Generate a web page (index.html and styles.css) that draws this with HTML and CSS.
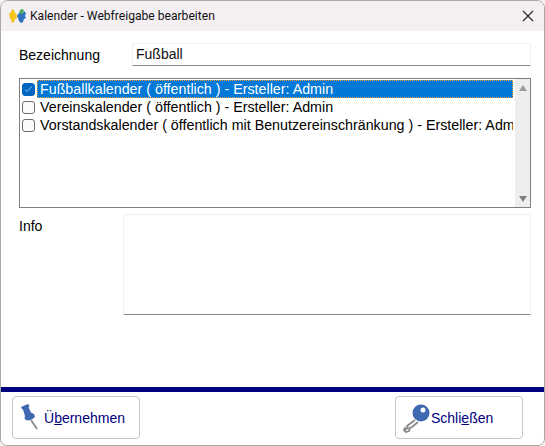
FILE: index.html
```html
<!DOCTYPE html>
<html lang="de">
<head>
<meta charset="utf-8">
<title>Kalender - Webfreigabe bearbeiten</title>
<link rel="stylesheet" href="styles.css">
</head>
<body>
<div class="window">
  <header class="titlebar">
    <svg class="app-icon" width="20" height="16" viewBox="0 0 20 16">
      <path fill="#f5c518" d="M0 6l2-2 1-3 2 1 1 3 2 2v3l-2 1-1 3-2 1-1-3-1-2z"/>
      <path fill="#2e74c0" d="M8 8l2-3 2-1 2 1 1-2 2 2-1 3 1 2-2 1-1 3-2 1-2-2-1-3z"/>
      <path fill="#4fae5a" d="M10 5l1-3 2-1 2 1-1 3-2 1z"/>
    </svg>
    <span class="title">Kalender - Webfreigabe bearbeiten</span>
    <svg class="close" width="12" height="12" viewBox="0 0 12 12"><path d="M1 1l10 10M11 1L1 11" stroke="#222" stroke-width="1.1" fill="none"/></svg>
  </header>
  <main class="content">
    <div class="name-row">
      <label class="label name-label">Bezeichnung</label>
      <div class="field name-field">Fußball</div>
    </div>
    <div class="list">
      <div class="items">
        <div class="item">
          <span class="check checked"><svg width="9" height="8" viewBox="0 0 9 8"><path d="M1 4.500l2.200 2L8 1.200" stroke="#9cc3e8" stroke-width="1" fill="none"/></svg></span>
          <span class="item-text selected">Fußballkalender ( öffentlich ) - Ersteller: Admin</span>
        </div>
        <div class="item"><span class="check"></span><span class="item-text">Vereinskalender ( öffentlich ) - Ersteller: Admin</span></div>
        <div class="item"><span class="check"></span><span class="item-text">Vorstandskalender ( öffentlich mit Benutzereinschränkung ) - Ersteller: Admin</span></div>
      </div>
      <div class="scrollbar">
        <span class="arrow up"></span>
        <span class="arrow down"></span>
      </div>
    </div>
    <div class="info-row">
      <label class="label info-label">Info</label>
      <div class="field info-field"></div>
    </div>
  </main>
  <footer class="footer">
    <button class="btn">
      <svg class="btn-icon" width="26" height="34" viewBox="0 0 26 34">
        <path d="M12 19l6 9" stroke="#8f8f8f" stroke-width="2" fill="none"/>
        <path fill="#3f68b0" d="M2 6l7-3 1.500 2-1 1.500 2.500 5 3 1.500 1 2.500-1.500 2-4.500 2-3.500-.5-1-2 .5-2-2-6.500-1-.5z"/>
      </svg>
      <span class="btn-text">Ü<u>b</u>ernehmen</span>
    </button>
    <button class="btn">
      <svg class="btn-icon key" width="30" height="34" viewBox="0 0 30 34">
        <path d="M13 19L5 25l1 2-2 1-1-1-1 2 2 2 3-1 1-3 2-1 6-5" stroke="#8a8a8a" stroke-width="1.800" fill="#fff"/>
        <circle cx="19" cy="12" r="8.500" fill="#3f68b0"/>
        <circle cx="21" cy="9" r="2.500" fill="#fff"/>
      </svg>
      <span class="btn-text">Schli<u>e</u>ßen</span>
    </button>
  </footer>
</div>
</body>
</html>
```
FILE: styles.css
```css
* { box-sizing: border-box; }
html, body { margin: 0; padding: 0; background: #f4f4f4; }
body { width: 545px; height: 446px; overflow: hidden; font-family: "Liberation Sans", Arial, sans-serif; font-size: 14px; color: #000; }
.window {
  width: 545px; height: 446px; display: flex; flex-direction: column;
  background: #fff; border: 1px solid #a8a8a8; border-radius: 8px 8px 7px 7px; overflow: hidden;
}
.titlebar { height: 30px; flex: none; display: flex; align-items: center; background: #f3eff3; padding: 0 10px 0 8px; }
.app-icon { flex: none; margin-right: 1px; }
.title { flex: 1; font-family: Roboto, sans-serif; font-size: 12.1px; color: #111; }
.close { flex: none; }
.content { flex: 1; padding: 12px 13px 0 18px; }
.name-row { display: flex; height: 23px; }
.label { display: block; line-height: 16px; }
.name-label { width: 113px; padding-top: 4px; }
.field { background: #fff; border: 1px solid #efefef; border-bottom: 1px solid #8a8a8a; border-radius: 3px 3px 0 0; }
.name-field { flex: 1; padding: 1px 3px 0; line-height: 18px; color: #111; }
.list { height: 130px; margin-top: 12px; border: 1px solid #7f7f7f; display: flex; padding: 1px 0 0 2px; }
.items { flex: 1; min-width: 0; overflow: hidden; }
.item { height: 18px; display: flex; align-items: center; white-space: nowrap; }
.check { flex: none; width: 13px; height: 13px; margin-right: 2px; border: 1px solid #6c6c6c; border-radius: 3px; background: #fbfbfb; display: flex; align-items: center; justify-content: center; }
.check.checked { background: #0067c0; border-color: #0067c0; }
.item-text { padding-left: 3px; height: 18px; line-height: 19px; flex: 1; font-size: 14.27px; overflow: hidden; }
.item-text.selected { background: #0078d7; color: #fff; outline: 1px dotted #e8a040; outline-offset: -1px; }
.scrollbar { flex: none; width: 15px; margin: -1px 0 0 2px; background: #eeeeee; display: flex; flex-direction: column; justify-content: space-between; align-items: center; padding: 6px 0 5px; }
.arrow { width: 0; height: 0; border-left: 4px solid transparent; border-right: 4px solid transparent; }
.arrow.up { border-bottom: 6px solid #9a9a9a; }
.arrow.down { border-top: 6px solid #808080; }
.info-row { display: flex; height: 101px; margin-top: 6px; }
.info-label { width: 104px; padding-top: 4px; }
.info-field { flex: 1; border-radius: 2px 2px 0 0; }
.footer { flex: none; height: 58px; border-top: 5px solid #000080; display: flex; justify-content: space-between; padding: 4px 21px 0 11px; }
.btn {
  width: 128px; height: 43px; display: flex; align-items: center; background: #fff;
  border: 1px solid #c6c6c6; border-radius: 4px; padding: 0 0 0 6px;
  font-family: "Liberation Sans", Arial, sans-serif; font-size: 14px; color: #000080;
}
.btn-icon { flex: none; margin-right: -1px; }
.btn-text { white-space: nowrap; }
```
